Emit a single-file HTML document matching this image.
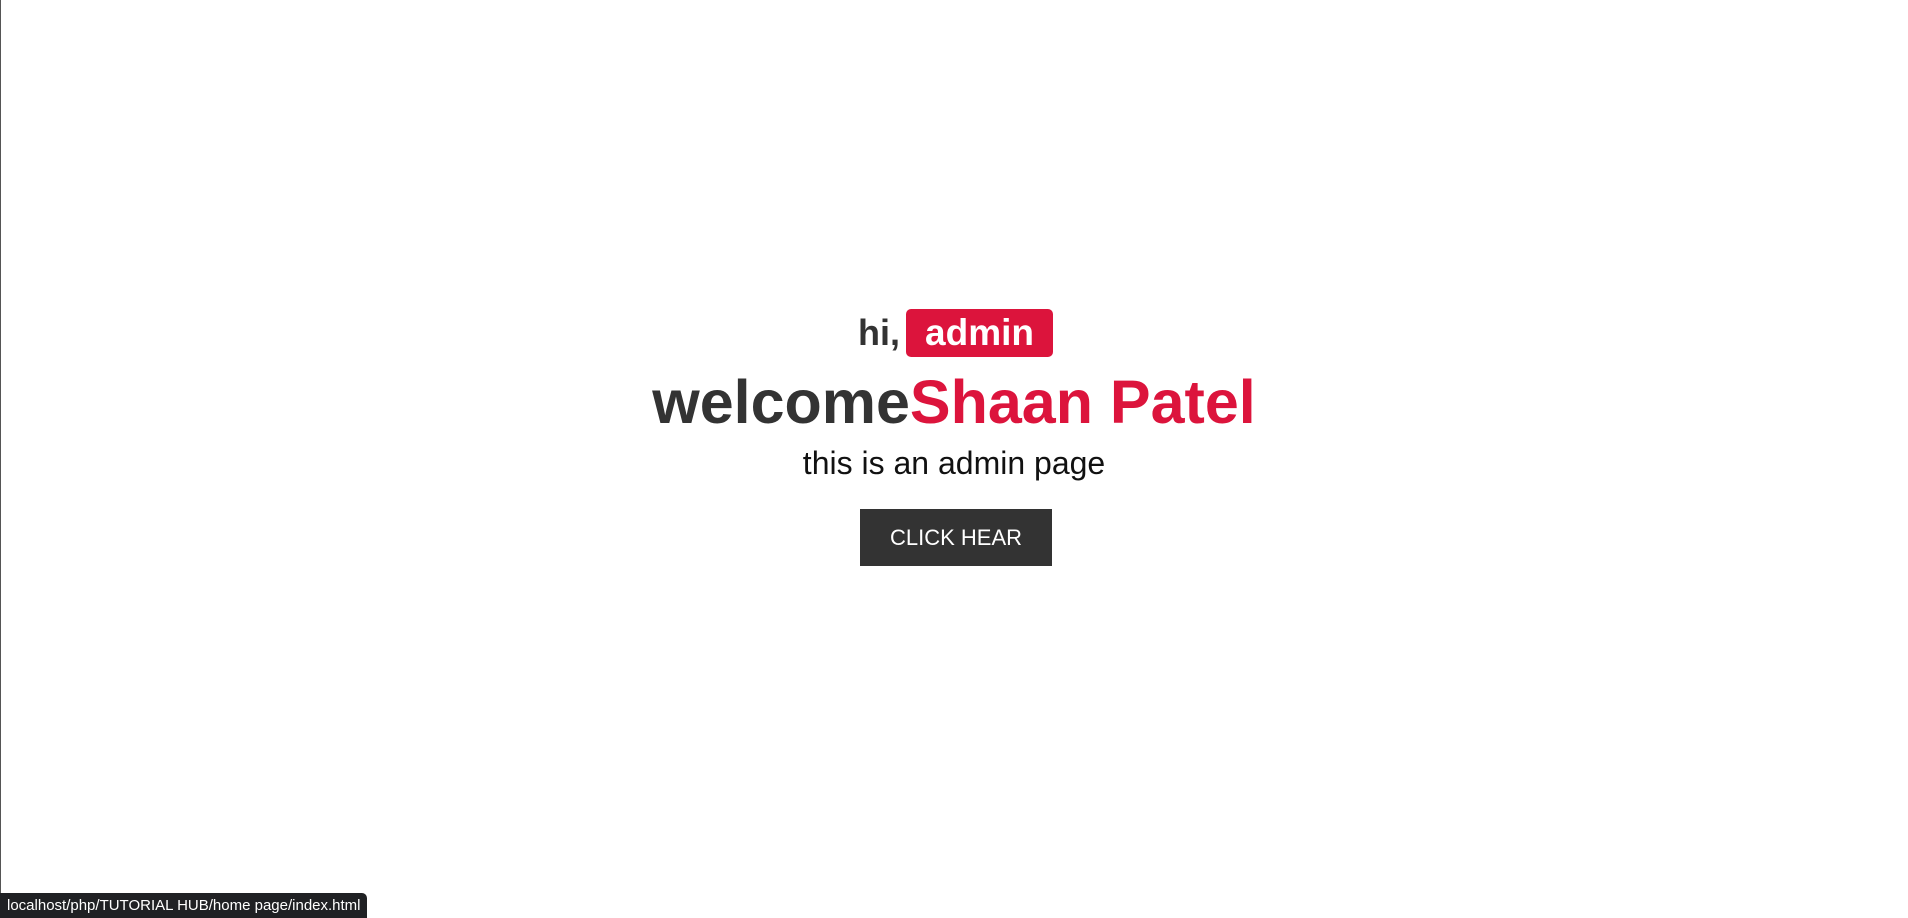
<!DOCTYPE html>
<html><head><meta charset="utf-8"><style>
html,body{margin:0;padding:0;width:1908px;height:918px;overflow:hidden;background:#fff;font-family:"Liberation Sans",Arial,sans-serif;}
.edge{position:absolute;left:0;top:0;width:1px;height:918px;background:#555;}
.hi{position:absolute;left:858px;top:309px;height:48px;display:flex;align-items:center;font-weight:bold;font-size:36px;color:#333;}
.badge{position:absolute;left:906px;top:309px;width:147px;height:48px;background:#dc143c;border-radius:5px;color:#fff;font-weight:bold;font-size:37px;display:flex;align-items:center;justify-content:center;}
.h1{position:absolute;left:0;width:1908px;top:366px;text-align:center;font-size:61px;font-weight:bold;color:#333;line-height:72px;}
.h1 span{color:#dc143c;}
.p{position:absolute;left:0;width:1908px;top:444px;text-align:center;font-size:32px;color:#111;line-height:38px;}
.btn{position:absolute;left:860px;top:509px;width:192px;height:57px;background:#333;color:#fff;font-size:22px;display:flex;align-items:center;justify-content:center;}
.status{position:absolute;left:0;top:893px;width:367px;height:25px;background:#202124;color:#fff;font-size:15px;line-height:25px;padding-left:7px;box-sizing:border-box;border-top-right-radius:5px;white-space:nowrap;}
</style></head><body>
<div class="edge"></div>
<div class="hi">hi,</div>
<div class="badge">admin</div>
<div class="h1">welcome<span>Shaan Patel</span></div>
<div class="p">this is an admin page</div>
<div class="btn">CLICK HEAR</div>
<div class="status">localhost/php/TUTORIAL HUB/home page/index.html</div>
</body></html>
